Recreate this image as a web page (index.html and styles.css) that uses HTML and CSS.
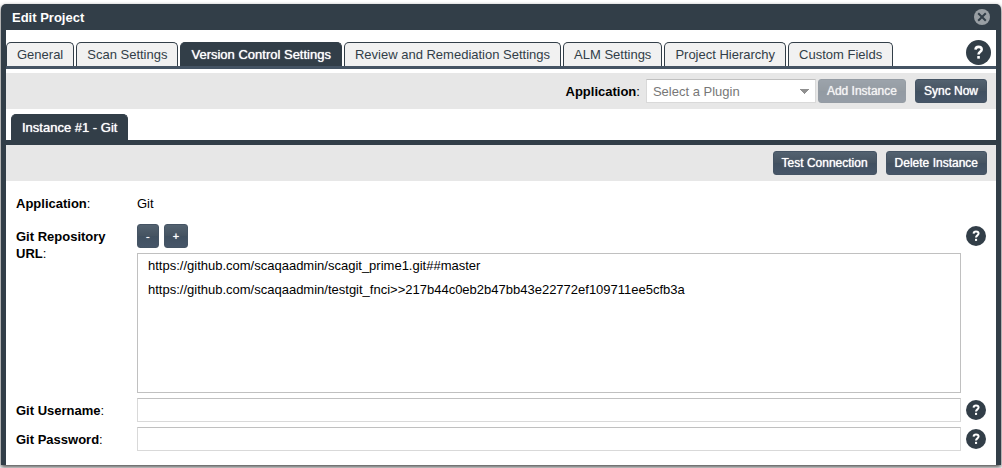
FILE: index.html
```html
<!DOCTYPE html>
<html lang="en">
<head>
<meta charset="utf-8">
<title>Edit Project</title>
<link rel="stylesheet" href="styles.css">
</head>
<body>
<svg class="symbols" aria-hidden="true">
  <symbol id="help" viewBox="0 0 24 24">
    <circle cx="12" cy="12" r="12" fill="#323e48"/>
    <path d="M9.1 9.2C9.2 7.4 10.3 6.6 12 6.6s3.1 .9 3.1 2.5c0 2.1-3.1 2.3-3.1 4.8" fill="none" stroke="#fff" stroke-width="2.4"/>
    <rect x="10.8" y="15.4" width="2.5" height="2.5" fill="#fff"/>
  </symbol>
</svg>
<main class="dialog">
  <header class="dialog-header">
    <h1 class="dialog-title">Edit Project</h1>
    <button class="icon-button" type="button" aria-label="Close">
      <svg class="close-icon" viewBox="0 0 16 16"><circle cx="8" cy="8" r="8" fill="#999fa4"/><path d="M4.2 4.2l7.6 7.6M11.8 4.2l-7.6 7.6" stroke="#323e48" stroke-width="2"/></svg>
    </button>
  </header>
  <div class="dialog-body">
    <div class="tab-bar">
      <nav class="tabs" role="tablist">
        <button class="tab" type="button" role="tab">General</button>
        <button class="tab" type="button" role="tab">Scan Settings</button>
        <button class="tab tab-active" type="button" role="tab" aria-selected="true">Version Control Settings</button>
        <button class="tab" type="button" role="tab">Review and Remediation Settings</button>
        <button class="tab" type="button" role="tab">ALM Settings</button>
        <button class="tab" type="button" role="tab">Project Hierarchy</button>
        <button class="tab" type="button" role="tab">Custom Fields</button>
      </nav>
      <button class="icon-button" type="button" aria-label="Help"><svg class="help-large"><use href="#help"/></svg></button>
    </div>
    <div class="toolbar">
      <div class="plugin-field">
        <label for="plugin"><b>Application</b>:</label>
        <select class="plugin-select" id="plugin"><option>Select a Plugin</option></select>
        <button class="button" type="button" disabled>Add Instance</button>
      </div>
      <button class="button" type="button">Sync Now</button>
    </div>
    <div class="instance-tabs" role="tablist">
      <button class="tab tab-active instance-tab" type="button" role="tab" aria-selected="true">Instance #1 - Git</button>
    </div>
    <div class="toolbar">
      <button class="button" type="button">Test Connection</button>
      <button class="button" type="button">Delete Instance</button>
    </div>
    <form class="form">
      <div class="row row-text">
        <span><b>Application</b>:</span>
        <span>Git</span>
      </div>
      <div class="row">
        <span class="label" id="url-label"><b>Git Repository URL</b>:</span>
        <div class="repositories">
          <div class="url-buttons">
            <button class="button small-button" type="button" aria-label="Remove URL">-</button>
            <button class="button small-button" type="button" aria-label="Add URL">+</button>
          </div>
          <ul class="url-list" role="listbox" aria-labelledby="url-label">
            <li class="url" role="option">https://github.com/scaqaadmin/scagit_prime1.git##master</li>
            <li class="url" role="option">https://github.com/scaqaadmin/testgit_fnci&gt;&gt;217b44c0eb2b47bb43e22772ef109711ee5cfb3a</li>
          </ul>
        </div>
        <button class="icon-button row-help" type="button" aria-label="Repository URL help"><svg class="help-small"><use href="#help"/></svg></button>
      </div>
      <div class="row">
        <label class="label" for="username"><b>Git Username</b>:</label>
        <input class="text-input" id="username" type="text">
        <button class="icon-button row-help" type="button" aria-label="Username help"><svg class="help-small"><use href="#help"/></svg></button>
      </div>
      <div class="row">
        <label class="label" for="password"><b>Git Password</b>:</label>
        <input class="text-input" id="password" type="password">
        <button class="icon-button row-help" type="button" aria-label="Password help"><svg class="help-small"><use href="#help"/></svg></button>
      </div>
    </form>
  </div>
</main>
</body>
</html>
```
FILE: styles.css
```css
* {
  box-sizing: border-box;
}

body {
  margin: 0;
  padding: 4px 1px 3px;
  background: #fff;
  color: #000;
  font: 13px/17px "Liberation Sans", Arial, sans-serif;
}

button,
input,
select {
  font: inherit;
}

.symbols {
  position: absolute;
  width: 0;
  height: 0;
}

.dialog {
  background: #323e48;
  border-radius: 5px 5px 0 0;
  box-shadow: 0 2px 4px #444;
}

.dialog-header {
  display: flex;
  align-items: center;
  justify-content: space-between;
  height: 26px;
  padding: 0 11px;
  color: #fff;
}

.dialog-title {
  margin: 0;
  font-size: 13px;
}

.icon-button {
  display: flex;
  padding: 0;
  border: 0;
  background: none;
}

.close-icon {
  width: 16px;
  height: 16px;
}

.help-large {
  width: 25px;
  height: 25px;
}

.help-small {
  width: 20px;
  height: 20px;
}

.dialog-body {
  margin: 0 5px;
  background: #fff;
}

.tab-bar {
  display: flex;
  align-items: flex-end;
  justify-content: space-between;
  padding: 10px 5px 0 0;
  border-bottom: 3px solid #455464;
  margin-bottom: 4px;
}

.tab-bar > .icon-button {
  padding-bottom: 1px;
}

.tabs {
  display: flex;
  gap: 2px;
}

.tab {
  height: 24px;
  padding: 0 10px;
  border: 1px solid #323e48;
  border-bottom: 0;
  border-radius: 5px 5px 0 0;
  background: #f1f1f1;
  color: #323e48;
  white-space: nowrap;
}

.tab-active {
  background: #323e48;
  color: #fff;
  text-shadow: 0 0 1px #fff;
}

.toolbar {
  display: flex;
  align-items: center;
  justify-content: flex-end;
  gap: 9px;
  height: 36px;
  padding: 0 9px;
  background: #e7e7e7;
}

.plugin-field {
  display: flex;
  align-items: center;
  gap: 2px;
}

.plugin-field label {
  padding-right: 4px;
}

.plugin-select {
  width: 170px;
  height: 24px;
  padding: 0 6px;
  border: 1px solid #d9d9d9;
  border-top-color: #c0c0c0;
  border-radius: 0;
  appearance: none;
  background:
    linear-gradient(to bottom right, #909090 50%, transparent 50%) right 6px center / 5px 5px no-repeat,
    linear-gradient(to bottom left, #909090 50%, transparent 50%) right 11px center / 5px 5px no-repeat,
    #fff;
  color: #777;
}

.button {
  height: 24px;
  padding: 0 8px;
  border: 1px solid #455464;
  border-radius: 3px;
  background: linear-gradient(#536270, #455361 50%, #405060 50%, #465568);
  color: #fff;
  font-size: 12px;
  text-shadow: 0 0 1px #fff;
}

.button:disabled {
  opacity: 0.5;
}

.instance-tabs {
  display: flex;
  padding: 5px 5px 0;
  border-bottom: 5px solid #323e48;
}

.instance-tab {
  height: 26px;
}

.form {
  display: flex;
  flex-direction: column;
  gap: 5px;
  padding: 12px 10px 14px;
}

.row {
  display: grid;
  grid-template-columns: 116px minmax(0, 1fr) 20px;
  column-gap: 5px;
}

.row-text {
  min-height: 26px;
  line-height: 22px;
}

.label {
  padding-top: 4px;
}

.row-help {
  align-self: start;
  padding-top: 2px;
}

.url-buttons {
  display: flex;
  gap: 5px;
  margin-bottom: 5px;
}

.small-button {
  font-size: 11px;
}

.url-list {
  height: 140px;
  margin: 0;
  padding: 0 10px;
  border: 1px solid #c0c0c0;
  list-style: none;
  overflow: auto;
}

.url {
  line-height: 24px;
}

.text-input {
  width: 100%;
  height: 24px;
  padding: 0 6px;
  border: 1px solid #d9d9d9;
  border-top-color: #c0c0c0;
}
```
